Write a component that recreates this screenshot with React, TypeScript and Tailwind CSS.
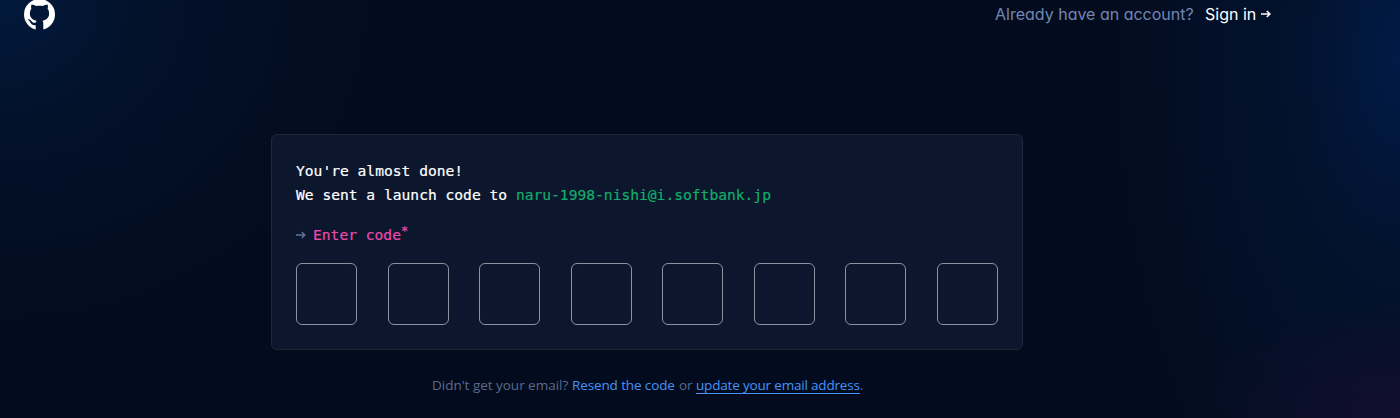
import React from "react";

const CODE_LENGTH = 8;

function GitHubMark() {
  return (
    <svg viewBox="0 0 31 31" className="h-[31px] w-[31px] fill-white" aria-hidden="true">
      <path d="M15.5 0A15.5 15.5 0 0 0 0 15.5C0 22.7 4.9 28.8 11.7 30.5V26.2C8.2 26.6 7 24.8 6.2 23.2C5.7 22.2 5 21.6 4.3 21.1C3.7 20.7 4.1 20.3 4.7 20.3C6.1 20.4 7.1 21.4 7.8 22.5C8.8 24 10.3 24.1 11.8 23.5C11.9 22.8 12.2 22.3 12.7 21.8C8.2 21.2 5.9 18.5 5.9 14.6C5.9 12.5 6.4 10.9 7.4 9.7C6.9 8.3 7 6.6 7.6 5.4C9.3 5.4 10.8 6.2 12.1 7.1C14.3 6.6 16.7 6.6 18.9 7.1C20.2 6.2 21.7 5.4 23.4 5.4C24 6.6 24.1 8.3 23.6 9.7C24.6 10.9 25.1 12.5 25.1 14.6C25.1 18.5 22.8 21.2 18.3 21.8C19 22.5 19.3 23.3 19.3 24.5V30.5C26.1 28.8 31 22.7 31 15.5A15.5 15.5 0 0 0 15.5 0Z" />
    </svg>
  );
}

function Arrow({ className }: { className: string }) {
  return (
    <svg viewBox="0 0 10 8" className={className} fill="none" stroke="currentColor" aria-hidden="true">
      <path d="M0 4H8.8M5.8 1L8.9 4L5.8 7" />
    </svg>
  );
}

function Header() {
  return (
    <header className="-mt-0.5 flex h-8 items-center justify-between pl-6 pr-[129px] font-['Inter',sans-serif] text-base [font-feature-settings:'cv11']">
      <GitHubMark />
      <div className="flex items-center gap-3">
        <span className="w-[198px] whitespace-nowrap text-[#7286b2]">Already have an account?</span>
        <a href="#" className="flex items-center gap-[5px] whitespace-nowrap text-white">
          <span className="w-[51px]">Sign in</span>
          <Arrow className="h-2 w-2.5 [stroke-width:1.6]" />
        </a>
      </div>
    </header>
  );
}

export default function App() {
  return (
    <div className="h-[418px] overflow-hidden bg-[#030c1f] bg-[radial-gradient(ellipse_200px_120px_at_100%_100%,rgba(24,14,46,0.75),rgba(16,14,40,0)),radial-gradient(ellipse_290px_560px_at_100%_14%,#021a46,rgba(2,22,54,0.6)_38%,rgba(3,12,31,0)),radial-gradient(ellipse_380px_330px_at_0%_0%,#02193c,rgba(2,20,48,0.6)_40%,rgba(3,12,31,0))]">
      <Header />
      <main className="ml-[271px] mt-[104px] w-[752px]">
        <section className="h-[216px] rounded-md border border-[#202737] bg-[#0c162d] px-6 pt-6 font-['DejaVu_Sans_Mono',monospace] text-[14.616px] leading-6 [-webkit-text-stroke:0.2px]">
          <p className="text-white">You're almost done!</p>
          <p className="whitespace-nowrap text-white">
            We sent a launch code to <span className="text-[#11ae6b]">naru-1998-nishi@i.softbank.jp</span>
          </p>
          <div className="mt-4 flex h-6 items-center text-[#ea4aaa]">
            <Arrow className="mr-[7px] h-2 w-2.5 text-[#627597] [stroke-width:1.3]" />
            <label>Enter code</label>
            <span className="-mt-2 text-[12px] leading-none">*</span>
          </div>
          <div className="mt-4 flex justify-between">
            {Array.from({ length: CODE_LENGTH }, (_, i) => (
              <input
                key={i}
                maxLength={1}
                aria-label={`Digit ${i + 1}`}
                className="h-[62px] w-[61px] rounded-md border border-[#8b949e] bg-transparent text-center text-white outline-none"
              />
            ))}
          </div>
        </section>
        <p className="ml-[161px] mt-[25px] flex whitespace-nowrap font-['Open_Sans',sans-serif] text-[13.5px] leading-5 text-[#596a8c]">
          <span className="w-[140px] tracking-[-0.02px]">Didn't get your email?</span>
          <a href="#" className="w-[107px] tracking-[-0.12px] text-[#4593f8]">Resend the code</a>
          <span className="w-[17px] tracking-[-0.1px]">or</span>
          <a href="#" className="h-[19px] w-[164px] border-b border-[#4593f8] tracking-[-0.18px] text-[#4593f8]">update your email address</a>
          <span>.</span>
        </p>
      </main>
    </div>
  );
}
